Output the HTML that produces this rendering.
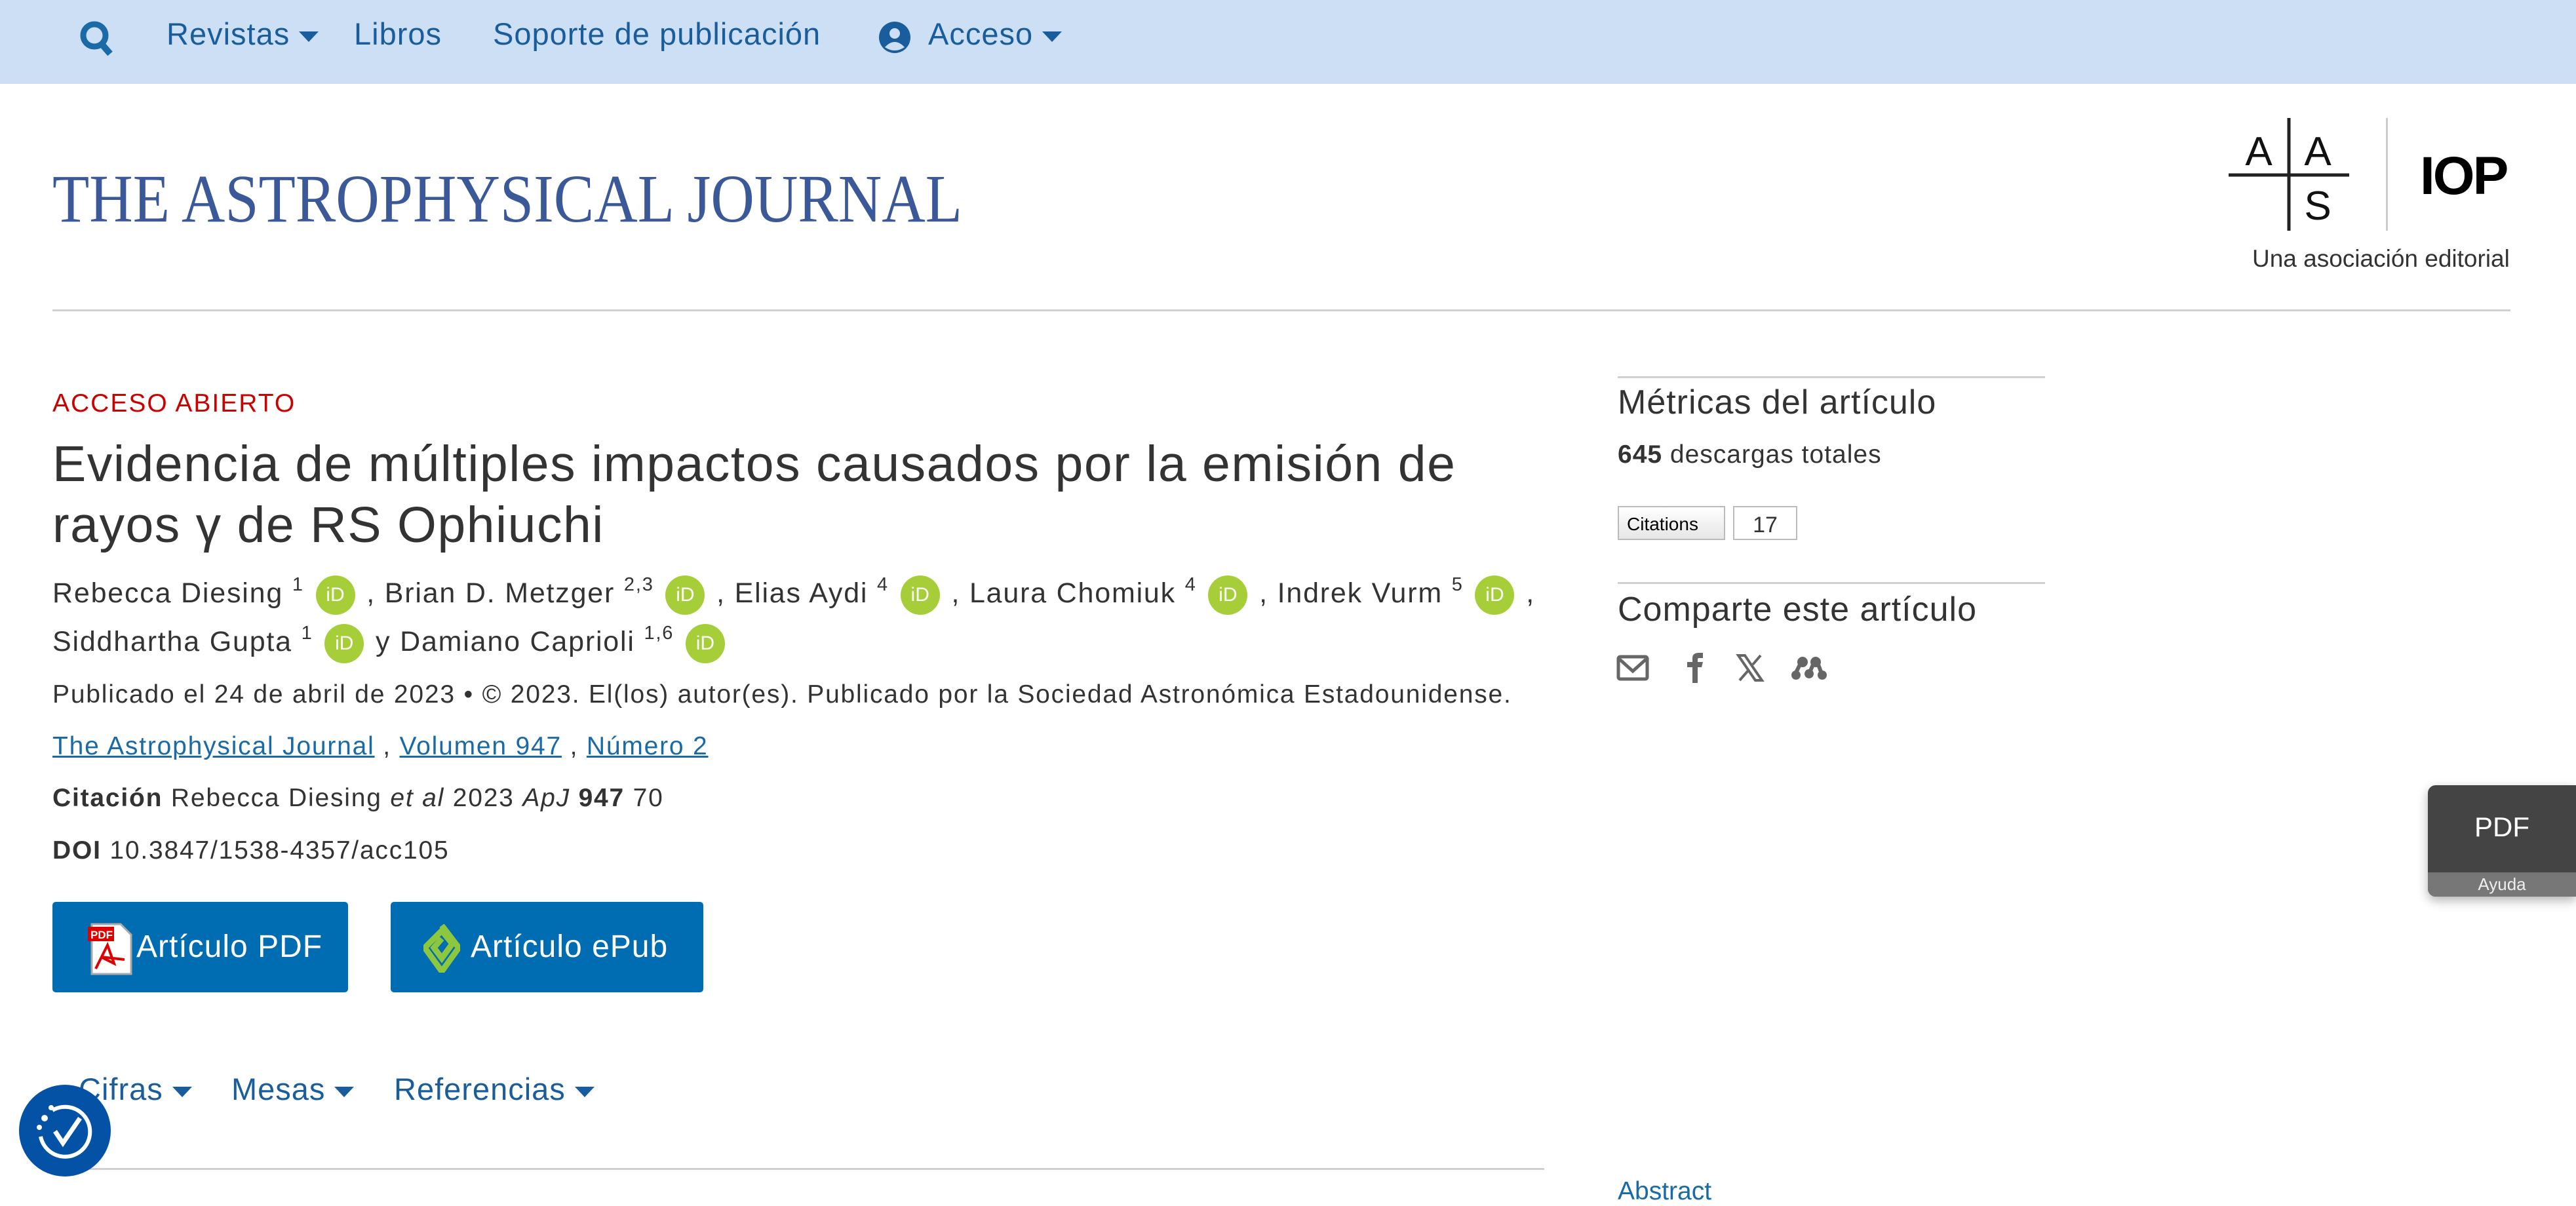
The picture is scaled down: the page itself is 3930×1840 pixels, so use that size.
<!DOCTYPE html>
<html><head><meta charset="utf-8"><style>
*{margin:0;padding:0;box-sizing:border-box}
body{width:3930px;height:1809px;overflow:hidden;background:#fff;font-family:"Liberation Sans",sans-serif;position:relative;color:#333}
.a{position:absolute;white-space:nowrap}
.nav{position:absolute;left:0;top:0;width:3930px;height:128px;background:#cddff5}
.nv{color:#1a5d9c;font-size:47px;top:24px;letter-spacing:1px}
.tri{display:inline-block;width:0;height:0;border-left:15px solid transparent;border-right:15px solid transparent;border-top:16px solid #1a5d9c;vertical-align:middle;margin-left:14px}
.orc{display:inline-block;width:60px;height:60px;border-radius:50%;background:#a6ce39;color:#fff;font-size:30px;text-align:center;line-height:60px;vertical-align:middle;margin:0 4px;letter-spacing:0}
sup{font-size:29px;vertical-align:18px}
.au{font-size:43px;left:80px;color:#333;letter-spacing:1.8px}
.ln{left:80px;font-size:39px;letter-spacing:1.8px}
.lnk{color:#1a6aa8;text-decoration:underline}
.btn{position:absolute;top:1376px;height:138px;background:#006db3;border-radius:5px;color:#fff;font-size:48px;line-height:138px}
.tab{color:#1a5d9c;font-size:47px;top:1634px;letter-spacing:1px}
</style></head><body>
<div class="nav"></div>
<svg class="a" style="left:118px;top:28px" width="60" height="62" viewBox="0 0 60 62"><circle cx="26" cy="26" r="17" fill="none" stroke="#1a6aa8" stroke-width="9"/><line x1="37" y1="39" x2="50" y2="54" stroke="#1a6aa8" stroke-width="10"/></svg>
<div class="a nv" style="left:254px">Revistas<span class="tri"></span></div>
<div class="a nv" style="left:540px">Libros</div>
<div class="a nv" style="left:752px">Soporte de publicación</div>
<svg class="a" style="left:1340px;top:32px" width="50" height="50" viewBox="0 0 50 50"><circle cx="25" cy="25" r="24" fill="#1a5d9c"/><circle cx="25" cy="19" r="8" fill="#cddff5"/><path d="M10 40 Q25 24 40 40 Q25 50 10 40Z" fill="#cddff5"/></svg>
<div class="a nv" style="left:1416px">Acceso<span class="tri"></span></div>

<svg class="a" style="left:80px;top:240px" width="1400" height="120"><text x="0" y="98" textLength="1388" lengthAdjust="spacingAndGlyphs" font-family="Liberation Serif" font-size="104" fill="#3b5998">THE ASTROPHYSICAL JOURNAL</text></svg>

<svg class="a" style="left:3400px;top:180px" width="190" height="172" viewBox="0 0 190 172"><line x1="0" y1="87" x2="184" y2="87" stroke="#222" stroke-width="5"/><line x1="92" y1="0" x2="92" y2="172" stroke="#222" stroke-width="5"/><text x="46" y="72" font-family="Liberation Sans" font-size="62" text-anchor="middle" fill="#111">A</text><text x="136" y="72" font-family="Liberation Sans" font-size="62" text-anchor="middle" fill="#111">A</text><text x="136" y="155" font-family="Liberation Sans" font-size="62" text-anchor="middle" fill="#111">S</text></svg>
<div class="a" style="left:3640px;top:180px;width:3px;height:172px;background:#ccc"></div>
<div class="a" style="left:3692px;top:222px;font-size:82px;font-weight:bold;color:#000;letter-spacing:-3px">IOP</div>
<div class="a" style="left:3436px;top:374px;font-size:37px;color:#333">Una asociación editorial</div>
<div class="a" style="left:80px;top:472px;width:3750px;height:3px;background:#d0d0d0"></div>

<div class="a" style="left:80px;top:594px;font-size:39px;color:#c00;letter-spacing:2px">ACCESO ABIERTO</div>
<div class="a" style="left:80px;top:662px;font-size:77px;line-height:93px;color:#333;letter-spacing:1.5px">Evidencia de múltiples impactos causados por la emisión de<br>rayos γ de RS Ophiuchi</div>
<div class="a au" style="top:876px">Rebecca Diesing <sup>1</sup> <span class="orc">iD</span> , Brian D. Metzger <sup>2,3</sup> <span class="orc">iD</span> , Elias Aydi <sup>4</sup> <span class="orc">iD</span> , Laura Chomiuk <sup>4</sup> <span class="orc">iD</span> , Indrek Vurm <sup>5</sup> <span class="orc">iD</span> ,</div>
<div class="a au" style="top:950px">Siddhartha Gupta <sup>1</sup> <span class="orc">iD</span> y Damiano Caprioli <sup>1,6</sup> <span class="orc">iD</span></div>
<div class="a ln" style="top:1038px">Publicado el 24 de abril de 2023 • © 2023. El(los) autor(es). Publicado por la Sociedad Astronómica Estadounidense.</div>
<div class="a ln" style="top:1117px"><span class="lnk">The Astrophysical Journal</span> , <span class="lnk">Volumen 947</span> , <span class="lnk">Número 2</span></div>
<div class="a ln" style="top:1196px"><b>Citación</b> Rebecca Diesing <i>et al</i> 2023 <i>ApJ</i> <b>947</b> 70</div>
<div class="a ln" style="top:1276px"><b>DOI</b> 10.3847/1538-4357/acc105</div>

<div class="btn" style="left:80px;width:451px"><svg class="a" style="left:54px;top:32px" width="68" height="80" viewBox="0 0 68 80"><path d="M6 2H50L66 18V78H6Z" fill="#fff" stroke="#aaa" stroke-width="3"/><rect x="0" y="6" width="40" height="22" fill="#d00"/><text x="4" y="24" font-size="17" font-family="Liberation Sans" font-weight="bold" fill="#fff">PDF</text><path d="M12 70 L30 34 L40 62 L20 52 L56 56" fill="none" stroke="#d00" stroke-width="4"/></svg><span style="position:absolute;left:128px;letter-spacing:1px">Artículo PDF</span></div>
<div class="btn" style="left:596px;width:477px"><svg class="a" style="left:50px;top:34px" width="56" height="74" viewBox="0 0 56 74"><path d="M28 2 L54 36 L28 72 L2 36 L28 10 L44 30 L28 52 L16 36 L28 22" fill="none" stroke="#8dc63f" stroke-width="9" stroke-linejoin="miter"/></svg><span style="position:absolute;left:122px;letter-spacing:1px">Artículo ePub</span></div>

<div class="a tab" style="left:120px">Cifras<span class="tri"></span></div>
<div class="a tab" style="left:353px">Mesas<span class="tri"></span></div>
<div class="a tab" style="left:601px">Referencias<span class="tri"></span></div>
<div class="a" style="left:80px;top:1782px;width:2276px;height:3px;background:#d0d0d0"></div>
<svg class="a" style="left:28px;top:1654px" width="142" height="142" viewBox="0 0 142 142"><circle cx="71" cy="71" r="70" fill="#0352a6"/><path d="M52 40 A38 38 0 1 1 34 80" fill="none" stroke="#fff" stroke-width="6"/><path d="M56 72 L68 90 L94 52" fill="none" stroke="#fff" stroke-width="7"/><circle cx="40" cy="52" r="5" fill="#fff"/><circle cx="32" cy="66" r="4" fill="#fff"/><circle cx="50" cy="36" r="4" fill="#fff"/></svg>

<div class="a" style="left:2468px;top:574px;width:652px;height:3px;background:#d0d0d0"></div>
<div class="a" style="left:2468px;top:584px;font-size:52px;letter-spacing:1px">Métricas del artículo</div>
<div class="a" style="left:2468px;top:672px;font-size:39px;letter-spacing:1px"><b>645</b> descargas totales</div>
<div class="a" style="left:2468px;top:772px;width:164px;height:52px;border:2px solid #bbb;background:linear-gradient(#fff,#e6e6e6);font-size:28px;color:#000;padding:10px 0 0 12px">Citations</div>
<div class="a" style="left:2644px;top:772px;width:98px;height:52px;border:2px solid #bbb;font-size:34px;text-align:center;line-height:54px">17</div>
<div class="a" style="left:2468px;top:888px;width:652px;height:3px;background:#d0d0d0"></div>
<div class="a" style="left:2468px;top:900px;font-size:52px;letter-spacing:1px">Comparte este artículo</div>
<svg class="a" style="left:2466px;top:996px" width="340" height="46" viewBox="0 0 340 46"><rect x="3" y="6" width="44" height="34" rx="3" fill="none" stroke="#666" stroke-width="5"/><path d="M5 10 L25 28 L45 10" fill="none" stroke="#666" stroke-width="5"/><path d="M116 46V22H108V14H116V8Q116 0 126 0H132V8H126Q124 8 124 10V14H132L130 22H124V46Z" fill="#666"/><path d="M186 4H196L222 42H212Z" fill="none" stroke="#666" stroke-width="4"/><path d="M188 42 L202 26 M208 18 L220 4" stroke="#666" stroke-width="4"/><g fill="#666"><circle cx="284" cy="14" r="8"/><circle cx="304" cy="14" r="8"/><circle cx="274" cy="34" r="7"/><circle cx="294" cy="32" r="7"/><circle cx="314" cy="34" r="7"/><path d="M280 18 L272 34 M300 18 L294 32 M308 18 L314 34" stroke="#666" stroke-width="6"/></g></svg>

<div class="a" style="left:3704px;top:1198px;width:226px;height:170px;background:#444;border-radius:12px 0 0 12px;box-shadow:0 6px 16px rgba(0,0,0,.3);overflow:hidden"><div style="color:#fff;font-size:42px;text-align:center;margin-top:40px">PDF</div><div style="position:absolute;left:0;bottom:0;width:226px;height:37px;background:#777;color:#eee;font-size:26px;text-align:center;line-height:37px">Ayuda</div></div>
<div class="a" style="left:2468px;top:1796px;font-size:39px;color:#1a6aa8">Abstract</div>
</body></html>
